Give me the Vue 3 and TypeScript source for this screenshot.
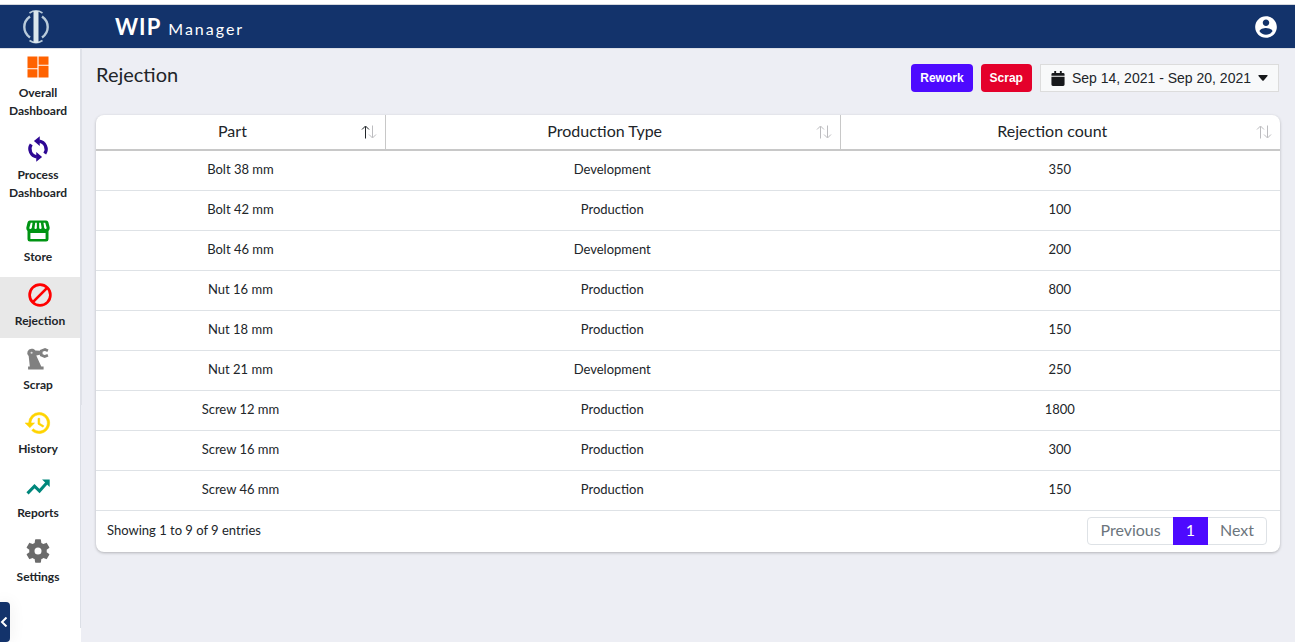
<script setup lang="ts">
import { computed, ref } from 'vue'

type IconName = 'dashboard' | 'sync' | 'store' | 'block' | 'robot' | 'history' | 'trend' | 'gear'
type ColumnKey = 'part' | 'type' | 'count'

interface NavItem {
  label: string
  icon: IconName
}

interface RejectionRow {
  part: string
  type: string
  count: number
}

const navItems: NavItem[] = [
  { label: 'Overall Dashboard', icon: 'dashboard' },
  { label: 'Process Dashboard', icon: 'sync' },
  { label: 'Store', icon: 'store' },
  { label: 'Rejection', icon: 'block' },
  { label: 'Scrap', icon: 'robot' },
  { label: 'History', icon: 'history' },
  { label: 'Reports', icon: 'trend' },
  { label: 'Settings', icon: 'gear' },
]
const active = ref('Rejection')

const columns: { key: ColumnKey; label: string }[] = [
  { key: 'part', label: 'Part' },
  { key: 'type', label: 'Production Type' },
  { key: 'count', label: 'Rejection count' },
]

const rows: RejectionRow[] = [
  { part: 'Bolt 38 mm', type: 'Development', count: 350 },
  { part: 'Bolt 42 mm', type: 'Production', count: 100 },
  { part: 'Bolt 46 mm', type: 'Development', count: 200 },
  { part: 'Nut 16 mm', type: 'Production', count: 800 },
  { part: 'Nut 18 mm', type: 'Production', count: 150 },
  { part: 'Nut 21 mm', type: 'Development', count: 250 },
  { part: 'Screw 12 mm', type: 'Production', count: 1800 },
  { part: 'Screw 16 mm', type: 'Production', count: 300 },
  { part: 'Screw 46 mm', type: 'Production', count: 150 },
]

const sortKey = ref<ColumnKey>('part')
const ascending = ref(true)

function sortBy(key: ColumnKey): void {
  ascending.value = sortKey.value === key ? !ascending.value : true
  sortKey.value = key
}

const sortedRows = computed(() => {
  const direction = ascending.value ? 1 : -1
  const key = sortKey.value
  return [...rows].sort((a, b) => {
    if (a[key] === b[key]) return 0
    return a[key] > b[key] ? direction : -direction
  })
})
</script>

<template>
  <div class="app">
    <header class="topbar">
      <svg class="logo" viewBox="0 0 28 36" aria-hidden="true">
        <g fill="none" stroke="#b9cbda">
          <path d="M8 7.500C4.500 10 2.300 13.500 2.300 18S4.500 26 8 28.500" stroke-width="2.400" />
          <path d="M20 7.500c3.500 2.500 5.700 6 5.700 10.500S23.500 26 20 28.500" stroke-width="2.400" />
          <path d="M7.500 4Q14-.500 20.500 4M7.500 31.500Q14 36 20.500 31.500" stroke-width="1.600" />
        </g>
        <path d="M11.500 2h5v32h-5z" fill="#dbe6ec" />
      </svg>
      <div class="brand"><strong>WIP</strong><span>Manager</span></div>
      <button class="account" type="button" aria-label="Account">
        <svg viewBox="0 0 24 24"><path fill="#fff" d="M12 2C6.480 2 2 6.480 2 12s4.480 10 10 10 10-4.480 10-10S17.520 2 12 2zm0 3c1.660 0 3 1.340 3 3s-1.340 3-3 3-3-1.340-3-3 1.340-3 3-3zm0 14.200c-2.500 0-4.710-1.280-6-3.220.03-1.990 4-3.080 6-3.080 1.990 0 5.970 1.090 6 3.080-1.290 1.940-3.500 3.220-6 3.220z" /></svg>
      </button>
    </header>

    <div class="body">
      <aside class="sidebar">
        <nav class="main-nav" aria-label="Main">
          <a
            v-for="item in navItems"
            :key="item.label"
            href="#"
            class="nav-item"
            :class="{ active: item.label === active }"
            @click.prevent="active = item.label"
          >
            <svg viewBox="0 0 24 24" aria-hidden="true">
              <path v-if="item.icon === 'dashboard'" fill="#ff6200" d="M3 13h8.500V3H3v10zm0 8h8.500v-7H3v7zm9.500 0H21V11h-8.500v10zm0-18v7H21V3h-8.500z" />
              <g v-else-if="item.icon === 'sync'">
                <path fill="none" stroke="#2e0894" stroke-width="2.800" d="M13 5.200A7 7 0 0 1 17.800 16M11 18.800A7 7 0 0 1 6.200 8" />
                <path fill="#2e0894" d="M13.500 1v8.500L8.500 5.200zM10.500 23v-8.500l5 4.300z" />
              </g>
              <g v-else-if="item.icon === 'store'">
                <path fill="#009413" d="M5 3h14a2 2 0 0 1 1.900 1.500L22 9a3 3 0 0 1-1 2.900V19a2 2 0 0 1-2 2H5a2 2 0 0 1-2-2v-7.100A3 3 0 0 1 2 9l1.100-4.500A2 2 0 0 1 5 3z" />
                <path fill="#fff" d="M5.800 5h1.500L6.700 9.200Q6.200 10.300 5.300 10.300T4.600 9.200zM9.600 5H11v4.200q0 1.100-1.100 1.100T9 9.200zM13 5h1.400l.7 4.200q0 1.100-1 1.100T13 9.200zM16.700 5h1.500l1.200 4.200q0 1.100-.800 1.100t-1.300-1.100zM5.500 13.700h13v5.100h-13z" />
              </g>
              <g v-else-if="item.icon === 'block'" fill="none" stroke="#f00" stroke-width="2.300">
                <circle cx="12" cy="12" r="8.900" />
                <path d="M5.900 18.100 18.100 5.900" />
              </g>
              <g v-else-if="item.icon === 'robot'">
                <path fill="#808080" d="M3.500 21v-2.500H5L4 9.500A3.600 3.600 0 0 1 6.500 3.200C8 3.100 9 3.700 9.700 4.700l4 .3v3.400L10.500 9l4.300 9.500h2V21z" />
                <circle cx="6.500" cy="6.700" r=".9" fill="#ddd" />
                <path fill="none" stroke="#808080" stroke-width="2.300" d="M20.500 5 18 3.800 14.800 5v3.600l2.900 1.300 2.800-1.200" />
              </g>
              <path v-else-if="item.icon === 'history'" fill="#ffd400" stroke="#ffd400" stroke-width=".5" d="M13 3a9 9 0 0 0-9 9H1l3.890 3.890.070.140L9 12H6a7 7 0 1 1 2.060 4.940l-1.420 1.420A9 9 0 1 0 13 3zm-1 5v5l4.280 2.540.720-1.210-3.500-2.080V8H12z" />
              <g v-else-if="item.icon === 'trend'">
                <path fill="none" stroke="#00877c" stroke-width="2.600" d="m3 17.500 6-6.200 4.300 4.200L20 8" />
                <path fill="#00877c" d="M15.500 5.500H22V12z" />
              </g>
              <path v-else fill="#6b6b6b" d="M19.430 12.980c.040-.320.070-.640.070-.980s-.030-.660-.070-.980l2.110-1.650c.190-.150.240-.420.120-.640l-2-3.460c-.120-.220-.390-.300-.610-.220l-2.490 1c-.520-.400-1.080-.730-1.690-.980l-.380-2.650C14.460 2.180 14.250 2 14 2h-4c-.250 0-.460.180-.490.420l-.380 2.650c-.610.250-1.170.590-1.690.980l-2.490-1c-.230-.090-.490 0-.610.220l-2 3.460c-.130.220-.070.490.120.640l2.110 1.650c-.040.320-.070.650-.070.980s.030.660.070.980l-2.110 1.650c-.190.150-.240.420-.120.640l2 3.460c.120.220.390.300.610.220l2.490-1c.520.400 1.080.730 1.690.980l.380 2.650c.030.240.240.420.490.420h4c.250 0 .460-.180.490-.420l.380-2.650c.610-.250 1.170-.590 1.690-.980l2.490 1c.230.090.490 0 .610-.220l2-3.460c.120-.220.070-.490-.120-.640l-2.110-1.650zM12 15a3 3 0 1 1 0-6 3 3 0 0 1 0 6z" />
            </svg>
            <span>{{ item.label }}</span>
          </a>
        </nav>
        <button class="collapse" type="button" aria-label="Collapse menu">
          <svg viewBox="0 0 8 10"><path d="M6.500 .5 2 5l4.500 4.500" fill="none" stroke="#fff" stroke-width="2" /></svg>
        </button>
      </aside>

      <main class="content">
        <div class="toolbar">
          <h1>Rejection</h1>
          <div class="actions">
            <button class="btn rework" type="button">Rework</button>
            <button class="btn scrap" type="button">Scrap</button>
            <button class="range" type="button">
              <svg class="calendar" viewBox="0 0 14 16" aria-hidden="true"><path fill="#16181b" d="M3 0h2v2h4V0h2v2h1.500A1.500 1.500 0 0 1 14 3.500V5H0V3.500A1.500 1.500 0 0 1 1.500 2H3zM0 6h14v8.500a1.500 1.500 0 0 1-1.500 1.500h-11A1.500 1.500 0 0 1 0 14.500z" /></svg>
              <span>Sep 14, 2021 - Sep 20, 2021</span>
              <svg class="caret" viewBox="0 0 10 6" aria-hidden="true"><path fill="#16181b" d="M1 0h8q1 .3.500 1L5.700 5.500q-.7.600-1.400 0L.5 1Q0 .3 1 0z" /></svg>
            </button>
          </div>
        </div>

        <section class="card">
          <table>
            <colgroup><col class="c-part" /><col class="c-type" /><col /></colgroup>
            <thead>
              <tr>
                <th v-for="col in columns" :key="col.key" scope="col">
                  <button type="button" @click="sortBy(col.key)">
                    <span>{{ col.label }}</span>
                    <svg viewBox="0 0 16 14" aria-hidden="true" fill="none">
                      <path class="arrow" :class="{ on: sortKey === col.key && ascending }" d="M4.500 13.500V1.500M1 4.500l3.500-3.500L8 4.500" />
                      <path class="arrow" :class="{ on: sortKey === col.key && !ascending }" d="M11.500 .5v12M8 9.500l3.500 3.500L15 9.500" />
                    </svg>
                  </button>
                </th>
              </tr>
            </thead>
            <tbody>
              <tr v-for="row in sortedRows" :key="row.part">
                <td>{{ row.part }}</td>
                <td>{{ row.type }}</td>
                <td>{{ row.count }}</td>
              </tr>
            </tbody>
          </table>
          <footer class="table-footer">
            <span>Showing 1 to 9 of 9 entries</span>
            <nav class="pager" aria-label="Pages">
              <button type="button">Previous</button>
              <button class="current" type="button" aria-current="page">1</button>
              <button type="button">Next</button>
            </nav>
          </footer>
        </section>
      </main>
    </div>
  </div>
</template>

<style>
body {
  background: #edeef4;
}
</style>

<style scoped>
* {
  box-sizing: border-box;
}
.app {
  min-height: 100vh;
  display: flex;
  flex-direction: column;
  border-top: 4px solid #fff;
  color: #212529;
  font: 13px/18px Lato, Carlito, sans-serif;
}
button {
  font: inherit;
  color: inherit;
  background: none;
  border: 0;
  padding: 0;
  cursor: pointer;
}
svg {
  display: block;
}
.topbar {
  height: 45px;
  display: flex;
  align-items: center;
  padding: 0 16px 0 22px;
  background: #13336b;
  border-top: 1px solid #d5d8dd;
  border-bottom: 1px solid #dcdfe6;
}
.logo {
  width: 28px;
  height: 36px;
}
.brand {
  flex: 1;
  display: flex;
  align-items: baseline;
  gap: 7px;
  padding: 2px 0 0 65px;
  color: #fff;
  font-size: 16px;
  line-height: 28px;
  letter-spacing: 2px;
}
.brand strong {
  font-size: 22px;
  letter-spacing: 1px;
}
.account svg {
  width: 26px;
  height: 26px;
}
.body {
  flex: 1;
  display: flex;
}
.sidebar {
  position: relative;
  display: flex;
  flex-direction: column;
  width: 81px;
  flex: none;
  background: #fff;
}
/* Slim scroll thumb lying over the edge of the menu */
.sidebar::after {
  content: "";
  position: absolute;
  top: 0;
  left: 80px;
  width: 2px;
  height: 60%;
  background: #dfe1e8;
}
.main-nav {
  flex: 1;
  margin-bottom: 14px;
  border-right: 1px solid #dcdfe6;
}
.nav-item {
  display: flex;
  flex-direction: column;
  align-items: center;
  gap: 3px;
  width: 76px;
  padding: 4px 8px 8px;
  margin-bottom: 3px;
  color: #212529;
  font-size: 12px;
  font-weight: 700;
  text-align: center;
  text-decoration: none;
}
.nav-item.active {
  width: 80px;
  background: #e8e8e8;
}
.nav-item svg {
  width: 28px;
  height: 28px;
}
.collapse {
  position: absolute;
  left: 0;
  bottom: 0;
  width: 10px;
  height: 40px;
  background: #13336b;
  border-radius: 0 4px 4px 0;
  box-shadow: 0 0 16px rgba(0, 0, 0, 0.08);
}
.collapse svg {
  width: 8px;
  height: 10px;
}
.content {
  flex: 1;
  min-width: 0;
  padding: 15px 15px 24px;
}
.toolbar {
  display: flex;
  justify-content: space-between;
  align-items: flex-start;
  margin-bottom: 23px;
}
h1 {
  margin: 0;
  font-size: 20px;
  line-height: 20px;
  font-weight: 400;
}
.actions {
  display: flex;
  gap: 8px;
  padding-right: 1px;
  font-family: "Liberation Sans", Arial, sans-serif;
}
.btn {
  height: 28px;
  padding: 0 9px;
  border-radius: 4px;
  color: #fff;
  font-size: 12px;
  font-weight: 700;
}
.rework {
  background: #4d0aff;
}
.scrap {
  background: #e4002b;
}
.range {
  display: flex;
  align-items: center;
  gap: 7px;
  height: 28px;
  padding: 0 10px;
  border: 1px solid #dcdcdc;
  background: #f8f9fa;
  font-size: 14px;
}
.calendar {
  width: 14px;
  height: 15px;
}
.caret {
  width: 10px;
  height: 6px;
}
.card {
  background: #fff;
  border-radius: 8px;
  box-shadow: 0 1px 3px rgba(0, 0, 0, 0.25);
}
table {
  width: 100%;
  table-layout: fixed;
  border-collapse: separate;
  border-spacing: 0;
}
.c-part {
  width: 24.4%;
}
.c-type {
  width: 38.4%;
}
th {
  padding: 0;
  border-bottom: 2px solid #c8c8c8;
  font-weight: 400;
  font-size: 16px;
}
th + th {
  border-left: 1px solid #c8c8c8;
}
th button {
  width: 100%;
  height: 34px;
  display: flex;
  align-items: center;
  padding: 0 8px;
}
th span {
  flex: 1;
  padding-bottom: 2px;
}
th svg {
  width: 16px;
  height: 14px;
}
.arrow {
  stroke: #bcbcbf;
}
.arrow.on {
  stroke: #212529;
}
td {
  height: 40px;
  padding: 0 10px 3px;
  border-bottom: 1px solid #dee2e6;
  text-align: center;
}
.table-footer {
  display: flex;
  justify-content: space-between;
  align-items: center;
  padding: 6px 13px 7px 11px;
}
.table-footer > span {
  padding-bottom: 2px;
}
.pager {
  display: flex;
  height: 28px;
  border: 1px solid #dee2e6;
  border-radius: 4px;
  color: #6c757d;
  font-size: 16px;
}
.pager button {
  padding: 0 12px 2px;
}
.pager .current {
  margin: -1px 0;
  padding: 0 13px 2px;
  background: #4d0aff;
  color: #fff;
}
</style>
